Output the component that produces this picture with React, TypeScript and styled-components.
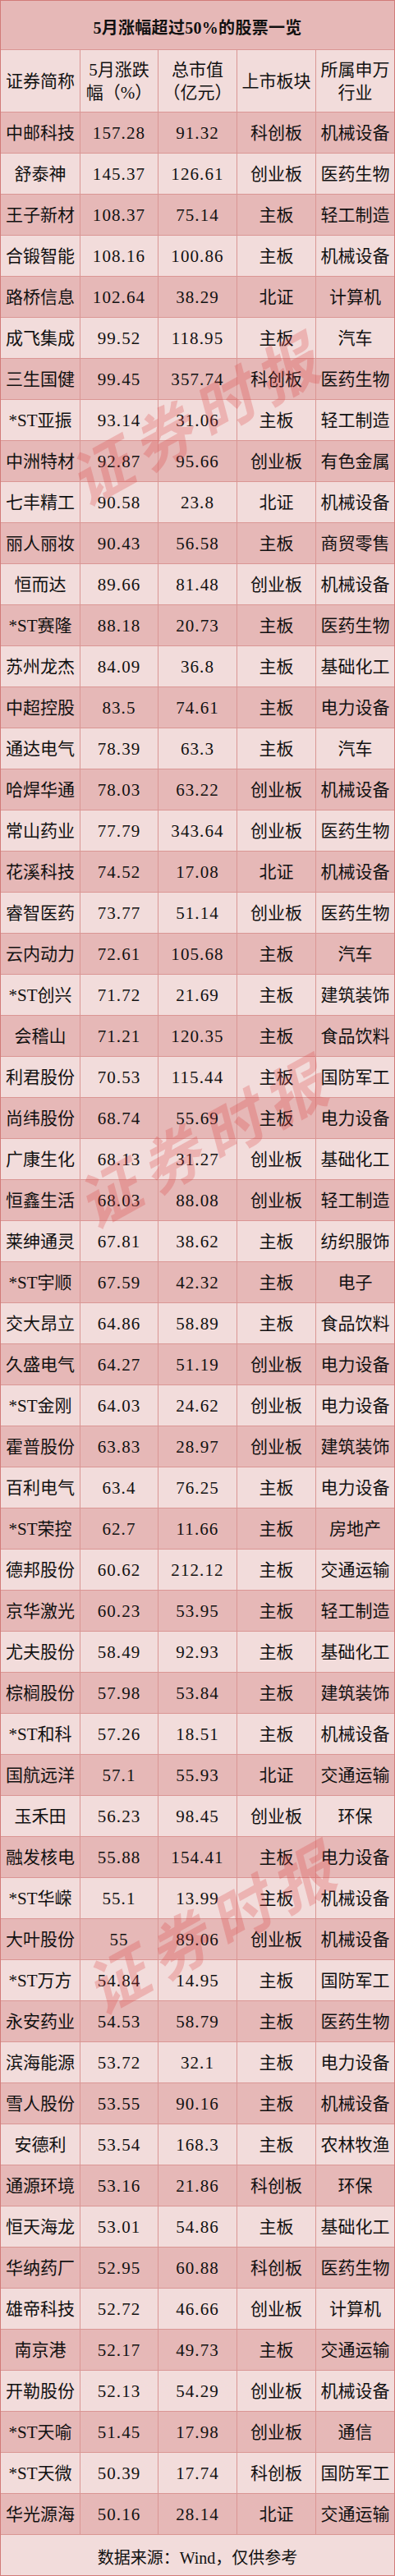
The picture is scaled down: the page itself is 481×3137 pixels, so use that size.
import React from 'react';
import styled, { createGlobalStyle } from 'styled-components';

type Stock = [string, string, string, string, string];

const rows: Stock[] = [
  ['中邮科技', '157.28', '91.32', '科创板', '机械设备'],
  ['舒泰神', '145.37', '126.61', '创业板', '医药生物'],
  ['王子新材', '108.37', '75.14', '主板', '轻工制造'],
  ['合锻智能', '108.16', '100.86', '主板', '机械设备'],
  ['路桥信息', '102.64', '38.29', '北证', '计算机'],
  ['成飞集成', '99.52', '118.95', '主板', '汽车'],
  ['三生国健', '99.45', '357.74', '科创板', '医药生物'],
  ['*ST亚振', '93.14', '31.06', '主板', '轻工制造'],
  ['中洲特材', '92.87', '95.66', '创业板', '有色金属'],
  ['七丰精工', '90.58', '23.8', '北证', '机械设备'],
  ['丽人丽妆', '90.43', '56.58', '主板', '商贸零售'],
  ['恒而达', '89.66', '81.48', '创业板', '机械设备'],
  ['*ST赛隆', '88.18', '20.73', '主板', '医药生物'],
  ['苏州龙杰', '84.09', '36.8', '主板', '基础化工'],
  ['中超控股', '83.5', '74.61', '主板', '电力设备'],
  ['通达电气', '78.39', '63.3', '主板', '汽车'],
  ['哈焊华通', '78.03', '63.22', '创业板', '机械设备'],
  ['常山药业', '77.79', '343.64', '创业板', '医药生物'],
  ['花溪科技', '74.52', '17.08', '北证', '机械设备'],
  ['睿智医药', '73.77', '51.14', '创业板', '医药生物'],
  ['云内动力', '72.61', '105.68', '主板', '汽车'],
  ['*ST创兴', '71.72', '21.69', '主板', '建筑装饰'],
  ['会稽山', '71.21', '120.35', '主板', '食品饮料'],
  ['利君股份', '70.53', '115.44', '主板', '国防军工'],
  ['尚纬股份', '68.74', '55.69', '主板', '电力设备'],
  ['广康生化', '68.13', '31.27', '创业板', '基础化工'],
  ['恒鑫生活', '68.03', '88.08', '创业板', '轻工制造'],
  ['莱绅通灵', '67.81', '38.62', '主板', '纺织服饰'],
  ['*ST宇顺', '67.59', '42.32', '主板', '电子'],
  ['交大昂立', '64.86', '58.89', '主板', '食品饮料'],
  ['久盛电气', '64.27', '51.19', '创业板', '电力设备'],
  ['*ST金刚', '64.03', '24.62', '创业板', '电力设备'],
  ['霍普股份', '63.83', '28.97', '创业板', '建筑装饰'],
  ['百利电气', '63.4', '76.25', '主板', '电力设备'],
  ['*ST荣控', '62.7', '11.66', '主板', '房地产'],
  ['德邦股份', '60.62', '212.12', '主板', '交通运输'],
  ['京华激光', '60.23', '53.95', '主板', '轻工制造'],
  ['尤夫股份', '58.49', '92.93', '主板', '基础化工'],
  ['棕榈股份', '57.98', '53.84', '主板', '建筑装饰'],
  ['*ST和科', '57.26', '18.51', '主板', '机械设备'],
  ['国航远洋', '57.1', '55.93', '北证', '交通运输'],
  ['玉禾田', '56.23', '98.45', '创业板', '环保'],
  ['融发核电', '55.88', '154.41', '主板', '电力设备'],
  ['*ST华嵘', '55.1', '13.99', '主板', '机械设备'],
  ['大叶股份', '55', '89.06', '创业板', '机械设备'],
  ['*ST万方', '54.84', '14.95', '主板', '国防军工'],
  ['永安药业', '54.53', '58.79', '主板', '医药生物'],
  ['滨海能源', '53.72', '32.1', '主板', '电力设备'],
  ['雪人股份', '53.55', '90.16', '主板', '机械设备'],
  ['安德利', '53.54', '168.3', '主板', '农林牧渔'],
  ['通源环境', '53.16', '21.86', '科创板', '环保'],
  ['恒天海龙', '53.01', '54.86', '主板', '基础化工'],
  ['华纳药厂', '52.95', '60.88', '科创板', '医药生物'],
  ['雄帝科技', '52.72', '46.66', '创业板', '计算机'],
  ['南京港', '52.17', '49.73', '主板', '交通运输'],
  ['开勒股份', '52.13', '54.29', '创业板', '机械设备'],
  ['*ST天喻', '51.45', '17.98', '创业板', '通信'],
  ['*ST天微', '50.39', '17.74', '科创板', '国防军工'],
  ['华光源海', '50.16', '28.14', '北证', '交通运输'],
];

const headers: string[][] = [
  ['证券简称'],
  ['5月涨跌', '幅（%）'],
  ['总市值', '（亿元）'],
  ['上市板块'],
  ['所属申万', '行业'],
];

// watermark centres, px from the sheet's top-left
const stamps = [
  { x: 237, y: 505 },
  { x: 247, y: 1385 },
  { x: 257, y: 2342 },
];

const dark = '#e6b8b7';
const light = '#f2dcdb';
const line = '#da9694';

const GlobalStyle = createGlobalStyle`
  html, body {
    margin: 0;
    padding: 0;
    background: #ffffff;
  }
  body {
    font-family: "Liberation Serif", "Noto Sans CJK SC", serif;
    color: #111111;
  }
`;

const Sheet = styled.div`
  position: relative;
  width: 481px;
  box-sizing: border-box;
  border: 1px solid #d27b79;
  overflow: hidden;
`;

const Title = styled.div`
  height: 60px;
  box-sizing: border-box;
  border-bottom: 1px solid ${line};
  background: ${dark};
  display: flex;
  align-items: center;
  justify-content: center;
  font-size: 20px;
  font-weight: 700;
  letter-spacing: 0.3px;
  padding-top: 4px;
`;

const Row = styled.div<{ $shade: 'dark' | 'light'; $height: number }>`
  display: grid;
  grid-template-columns: 97px 95px 96px 96px 95px;
  height: ${({ $height }) => $height}px;
  box-sizing: border-box;
  border-bottom: 1px solid ${line};
  background: ${({ $shade }) => ($shade === 'dark' ? dark : light)};
`;

const Cell = styled.div`
  display: flex;
  flex-direction: column;
  align-items: center;
  justify-content: center;
  border-right: 1px solid ${line};
  font-size: 21px;
  line-height: 28px;
  white-space: nowrap;
  overflow: hidden;
  &:last-child {
    border-right: none;
  }
`;

const Num = styled.span`
  letter-spacing: 1.1px;
`;

const Footer = styled.div`
  height: 49px;
  background: ${light};
  display: flex;
  align-items: center;
  justify-content: center;
  font-size: 20px;
  padding-top: 4px;
  box-sizing: border-box;
`;

const Stamp = styled.div`
  position: absolute;
  transform: translate(-50%, -50%) rotate(-29deg);
  font-family: "Noto Sans CJK SC", sans-serif;
  font-weight: 700;
  font-size: 74px;
  letter-spacing: 12px;
  color: rgba(222, 60, 60, 0.26);
  white-space: nowrap;
  pointer-events: none;
  font-style: italic;
`;

export default function App() {
  return (
    <>
      <GlobalStyle />
      <Sheet>
        <Title>5月涨幅超过50%的股票一览</Title>
        <Row $shade="light" $height={76}>
          {headers.map((h) => (
            <Cell key={h.join('')}>
              {h.map((t) => (
                <span key={t}>{t}</span>
              ))}
            </Cell>
          ))}
        </Row>
        {rows.map((r, i) => (
          <Row key={r[0]} $shade={i % 2 === 0 ? 'dark' : 'light'} $height={50}>
            <Cell>{r[0]}</Cell>
            <Cell>
              <Num>{r[1]}</Num>
            </Cell>
            <Cell>
              <Num>{r[2]}</Num>
            </Cell>
            <Cell>{r[3]}</Cell>
            <Cell>{r[4]}</Cell>
          </Row>
        ))}
        <Footer>数据来源：Wind，仅供参考</Footer>
        {stamps.map((s) => (
          <Stamp key={s.y} style={{ left: s.x, top: s.y }}>
            证券时报
          </Stamp>
        ))}
      </Sheet>
    </>
  );
}
